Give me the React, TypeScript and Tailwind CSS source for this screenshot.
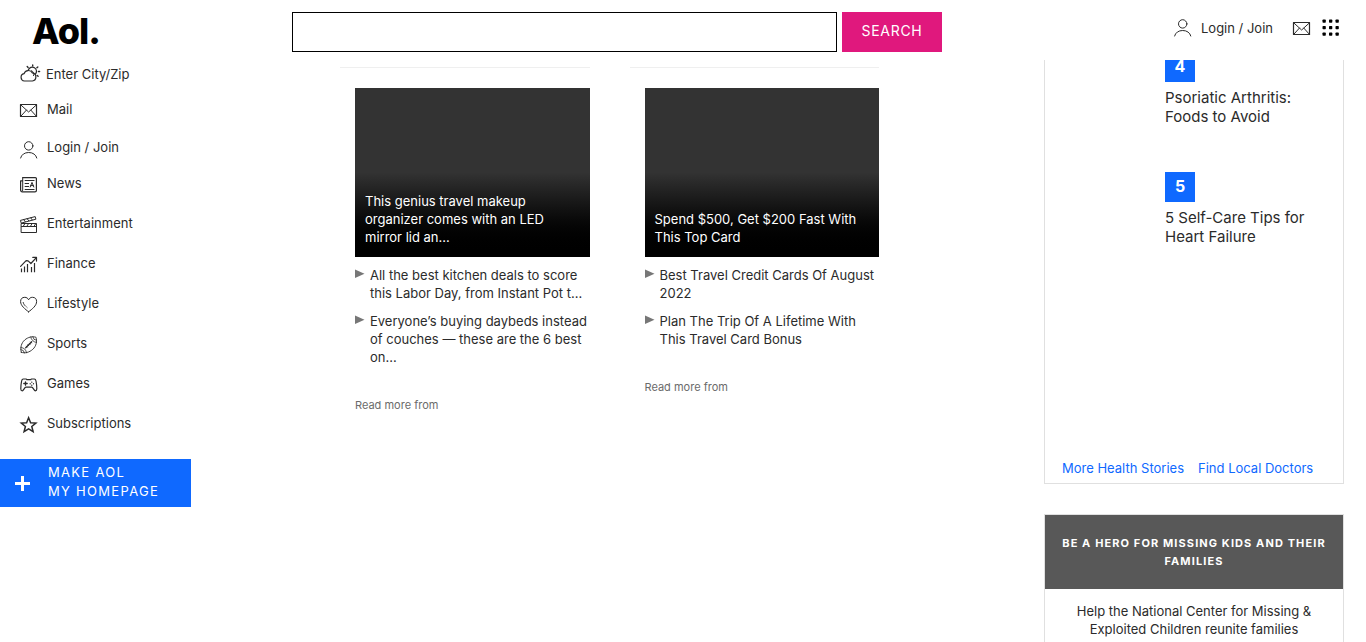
import type { ReactNode } from "react";

function Icon({ children, size = 18 }: { children: ReactNode; size?: number }) {
  return (
    <svg
      aria-hidden="true"
      width={size}
      height={size}
      viewBox={`0 0 ${size} ${size}`}
      fill="none"
      stroke="currentColor"
      strokeWidth="1"
      strokeLinecap="round"
      strokeLinejoin="round"
      className="shrink-0 overflow-visible"
    >
      {children}
    </svg>
  );
}

const WeatherIcon = () => (
  <Icon size={20}>
    <path
      d="M4.400 17A3.700 3.700 0 0 1 4 9.700 4.600 4.600 0 0 1 12.400 8.900 4.100 4.100 0 0 1 12.400 17Z"
      strokeWidth="1.200"
    />
    <path d="M8.300 6A4.200 4.200 0 1 1 15.300 10.200" strokeWidth="1.200" />
    <path d="M11.500 6.700A3.600 3.600 0 0 1 13.600 11.600" />
    <path d="M7.200 2.600l.9.900M12.700.9v1.200M17.800 2.900l-.9.900M19.600 7.500h-1.200M18.100 12.300l-.9-.8" strokeWidth="1.400" />
  </Icon>
);

const MailIcon = () => (
  <Icon>
    <path d="M.5 3.500h16v12h-16Z" strokeWidth="1.200" />
    <path d="M.8 3.900 8.600 11l7.800-7.100M.8 15.300l5.600-6.200M16.400 15.300l-5.600-6.200" />
  </Icon>
);

const UserIcon = () => (
  <Icon>
    <circle cx="8.700" cy="4.900" r="4.200" />
    <path d="M.6 17c.8-3.400 4-5.500 8.100-5.500s7.300 2.100 8.100 5.500" />
  </Icon>
);

const NewsIcon = () => (
  <Icon>
    <path
      d="M2.700 1.600h12.700a1 1 0 0 1 1 1v11.800a1.400 1.400 0 0 1-1.400 1.400H2.200A1.600 1.600 0 0 1 .6 14.200V4.800h2"
      strokeWidth="1.200"
    />
    <path d="M2.700 1.800v12.200a1 1 0 0 1-1 1.200M5.100 4.500h9M5.100 7.500h3.500M5.100 10.500h3.500M5.100 13.500h9" />
    <path d="m10.200 11 1.800-4.600 1.800 4.600m-3.100-1.400h2.600" />
  </Icon>
);

const FilmIcon = () => (
  <Icon>
    <path d="M1.500 7.500h15v9h-15ZM1.500 10.500h15" />
    <path d="m.8 4.300 14.400-3.700.7 2.600L1.600 7Z" />
    <path d="m3.700 3.700 1.600 2M7.200 2.800l1.600 2M10.700 1.900l1.600 2M4.800 7.800l-1.500 2.400M8.400 7.800l-1.500 2.400M12 7.800l-1.500 2.400M15.600 7.800l-1.500 2.400" />
  </Icon>
);

const ChartIcon = () => (
  <Icon>
    <path d="m.6 10.300 5.500-5.600 2 .2 2.800 2.600 5.200-5.700M12.800 1.400h3.700v3.700" strokeWidth="1.200" />
    <path d="M1.500 12.600v3.700M4.500 10.400v5.900M7.500 8v8.300M11.500 11v5.300M14.500 7v9.300" strokeLinecap="butt" strokeWidth="1.200" />
  </Icon>
);

const HeartIcon = () => (
  <Icon>
    <path d="M8.600 15.800C5 13.100.6 9.600.6 5.600A4.300 4.300 0 0 1 4.800 1.300c1.800 0 3.100 1 3.800 2.500.7-1.500 2-2.500 3.800-2.500A4.300 4.300 0 0 1 16.600 5.600c0 4-4.400 7.500-8 10.200Z" />
    <path d="M3.200 6.500c.3 1.500 1.300 2.600 2.300 3.600M6.800 11.200l.3.300" />
  </Icon>
);

const FootballIcon = () => (
  <Icon>
    <path
      d="M1.300 16.300C0 11.700 1.300 7 4.700 4S12.300.2 15.900 1.200c1.500 4 .3 9-3.100 12.100s-7.900 4.300-11.500 3Z"
      strokeWidth=".9"
    />
    <path
      d="M.9 11.500a6 6 0 0 1 5.600 5.300M.9 13.500a4 4 0 0 1 3.600 3.500M10.800.9a6 6 0 0 0 5.600 5.500M12.800.8a4 4 0 0 0 3.700 3.600"
      strokeWidth=".8"
    />
    <path d="m5.700 11.800 6-6.100" strokeWidth="1.300" />
    <path d="m6.400 10.200.9.900M7.800 8.800l.9.900M9.200 7.300l.9.900M10.500 6l.9.900" strokeWidth=".8" />
  </Icon>
);

const GamepadIcon = () => (
  <Icon>
    <path
      d="M3.300 3h3l.5.700h4l.5-.7h3c1 0 1.500 1 1.700 2 .5 2.500.8 5.200.8 7.800 0 1.400-.6 2-1.500 2-1.200 0-2.200-3.600-3.600-3.600H5.900c-1.400 0-2.400 3.600-3.600 3.600-1 0-1.500-.6-1.500-2 0-2.600.3-5.300.8-7.800.2-1 .7-2 1.700-2Z"
      strokeWidth="1.200"
    />
    <path d="M5.500 5.800v3.400M3.800 7.500h3.400" strokeWidth="1.300" />
    <path d="M11.800 6.100v.1M10.200 7.700v.1M13.500 7.700v.1M11.800 9.200v.1" strokeWidth="1.300" />
  </Icon>
);

const StarIcon = () => (
  <Icon>
    <path
      d="m8.600 1.800 2 4.900 5.300.4-4.100 3.400 1.300 5.100-4.500-2.800-4.500 2.800 1.300-5.100-4.100-3.400 5.300-.4Z"
      strokeWidth="1.500"
      strokeLinejoin="miter"
    />
  </Icon>
);

const sections = [
  { label: "News", icon: <NewsIcon /> },
  { label: "Entertainment", icon: <FilmIcon /> },
  { label: "Finance", icon: <ChartIcon /> },
  { label: "Lifestyle", icon: <HeartIcon /> },
  { label: "Sports", icon: <FootballIcon /> },
  { label: "Games", icon: <GamepadIcon /> },
  { label: "Subscriptions", icon: <StarIcon /> },
];

const cards = [
  {
    title: "This genius travel makeup organizer comes with an LED mirror lid an...",
    links: [
      "All the best kitchen deals to score this Labor Day, from Instant Pot t...",
      "Everyone’s buying daybeds instead of couches — these are the 6 best on...",
    ],
  },
  {
    title: "Spend $500, Get $200 Fast With This Top Card",
    links: [
      "Best Travel Credit Cards Of August 2022",
      "Plan The Trip Of A Lifetime With This Travel Card Bonus",
    ],
  },
];

const health = [
  { rank: 4, title: "Psoriatic Arthritis: Foods to Avoid" },
  { rank: 5, title: "5 Self-Care Tips for Heart Failure" },
];

function Header() {
  return (
    <header className="sticky top-0 z-10 flex h-15 bg-white">
      <div className="w-[292px] shrink-0 pl-8">
        <a href="#home" className="block text-[36px] leading-[62px] font-extrabold tracking-tight text-black">
          Aol.
        </a>
      </div>
      <form className="mt-1 flex h-10 max-w-[650px] flex-1 gap-[5px] self-center" onSubmit={(e) => e.preventDefault()}>
        <input type="text" aria-label="Search" className="min-w-0 flex-1 border border-black px-3 outline-none" />
        <button type="submit" className="w-25 bg-[#e0187d] pb-[2px] text-sm tracking-wider text-white">
          SEARCH
        </button>
      </form>
      <div className="ml-auto flex h-14 items-center pr-[26px]">
        <a href="#login" className="flex items-center gap-[9px]">
          <UserIcon />
          Login / Join
        </a>
        <a href="#mail" aria-label="Mail" className="ml-5">
          <MailIcon />
        </a>
        <button type="button" aria-label="Apps" className="ml-[11px] text-black">
          <svg width="18" height="18" viewBox="0 0 18 18" fill="currentColor" aria-hidden="true">
            {[0.5, 7, 13.5].map((y) =>
              [0.5, 7, 13.5].map((x) => <rect key={`${x}-${y}`} x={x} y={y} width="3.300" height="3.300" rx=".7" />),
            )}
          </svg>
        </button>
      </div>
    </header>
  );
}

function Sidebar() {
  return (
    <nav className="w-[191px] shrink-0">
      <a href="#weather" className="flex h-7 items-center gap-[6px] pl-5">
        <WeatherIcon />
        Enter City/Zip
      </a>
      <a href="#mail" className="flex h-[42px] items-center gap-[9px] pl-5">
        <span className="pt-[2px]">
          <MailIcon />
        </span>
        Mail
      </a>
      <a href="#login" className="flex h-[33px] items-center gap-[9px] pl-5">
        <span className="pt-[6px]">
          <UserIcon />
        </span>
        Login / Join
      </a>
      {sections.map((s) => (
        <a key={s.label} href="#section" className="flex h-10 items-center gap-[9px] pl-5">
          <span className="pt-[4px]">{s.icon}</span>
          {s.label}
        </a>
      ))}
      <button
        type="button"
        className="mt-4 flex h-12 w-full items-center gap-[18px] bg-[#0f69ff] pl-[15px] text-left leading-[19px] tracking-widest text-white"
      >
        <svg width="15" height="15" viewBox="0 0 15 15" aria-hidden="true">
          <path d="M7.500 0v15M0 7.500h15" stroke="currentColor" strokeWidth="3" />
        </svg>
        <span className="pb-[2px]">
          MAKE AOL
          <br />
          MY HOMEPAGE
        </span>
      </button>
    </nav>
  );
}

export default function App() {
  return (
    <div className="min-h-screen bg-white font-['Inter',sans-serif] text-[13px] leading-[18px] text-[#2b2b2b]">
      <Header />
      <div className="flex items-start">
        <Sidebar />
        <main className="ml-[149px] grid max-w-[539px] flex-1 grid-cols-2 gap-10 pt-[7px]">
          {cards.map((card) => (
            <article key={card.title} className="border-t border-[#efefef] pt-5 pl-[15px]">
              <a
                href="#story"
                className="flex h-[169px] items-end bg-linear-to-b from-[#333] from-50% to-black px-[10px] pb-[11px] text-white"
              >
                {card.title}
              </a>
              <ul className="mt-[9px] flex flex-col gap-[10px]">
                {card.links.map((link) => (
                  <li key={link} className="flex gap-[5px]">
                    <svg width="10" height="16" viewBox="0 0 10 16" className="shrink-0" aria-hidden="true">
                      <path d="M0 3.500v8.500l9.500-4.200Z" fill="#777" />
                    </svg>
                    <a href="#story">{link}</a>
                  </li>
                ))}
              </ul>
              <p className="mt-[30px] text-[11px] text-[#6b6b6b]">Read more from</p>
            </article>
          ))}
        </main>
        <aside className="-mt-2 mr-[22px] ml-auto w-[300px] shrink-0">
          <section className="border-x border-b border-[#e0e0e0]">
            <ul className="h-[407px] pr-5 pl-[120px] text-[15px] leading-[19px]">
              {health.map((h) => (
                <li key={h.rank} className="h-[120px]">
                  <span className="mb-[6px] flex size-[30px] items-center justify-center bg-[#0f69ff] pb-[2px] text-base font-bold text-white">
                    {h.rank}
                  </span>
                  <a href="#health">{h.title}</a>
                </li>
              ))}
            </ul>
            <div className="flex gap-[14px] pb-[6px] pl-[17px] whitespace-nowrap text-[#0f69ff]">
              <a href="#stories">More Health Stories</a>
              <a href="#doctors">Find Local Doctors</a>
            </div>
          </section>
          <section className="mt-[30px] border border-[#e0e0e0] text-center">
            <h2 className="bg-[#585858] px-4 py-[19px] text-[11px] font-bold tracking-widest text-white">
              BE A HERO FOR MISSING KIDS AND THEIR FAMILIES
            </h2>
            <p className="px-5 pt-[13px] pb-3">Help the National Center for Missing &amp; Exploited Children reunite families</p>
          </section>
        </aside>
      </div>
    </div>
  );
}
